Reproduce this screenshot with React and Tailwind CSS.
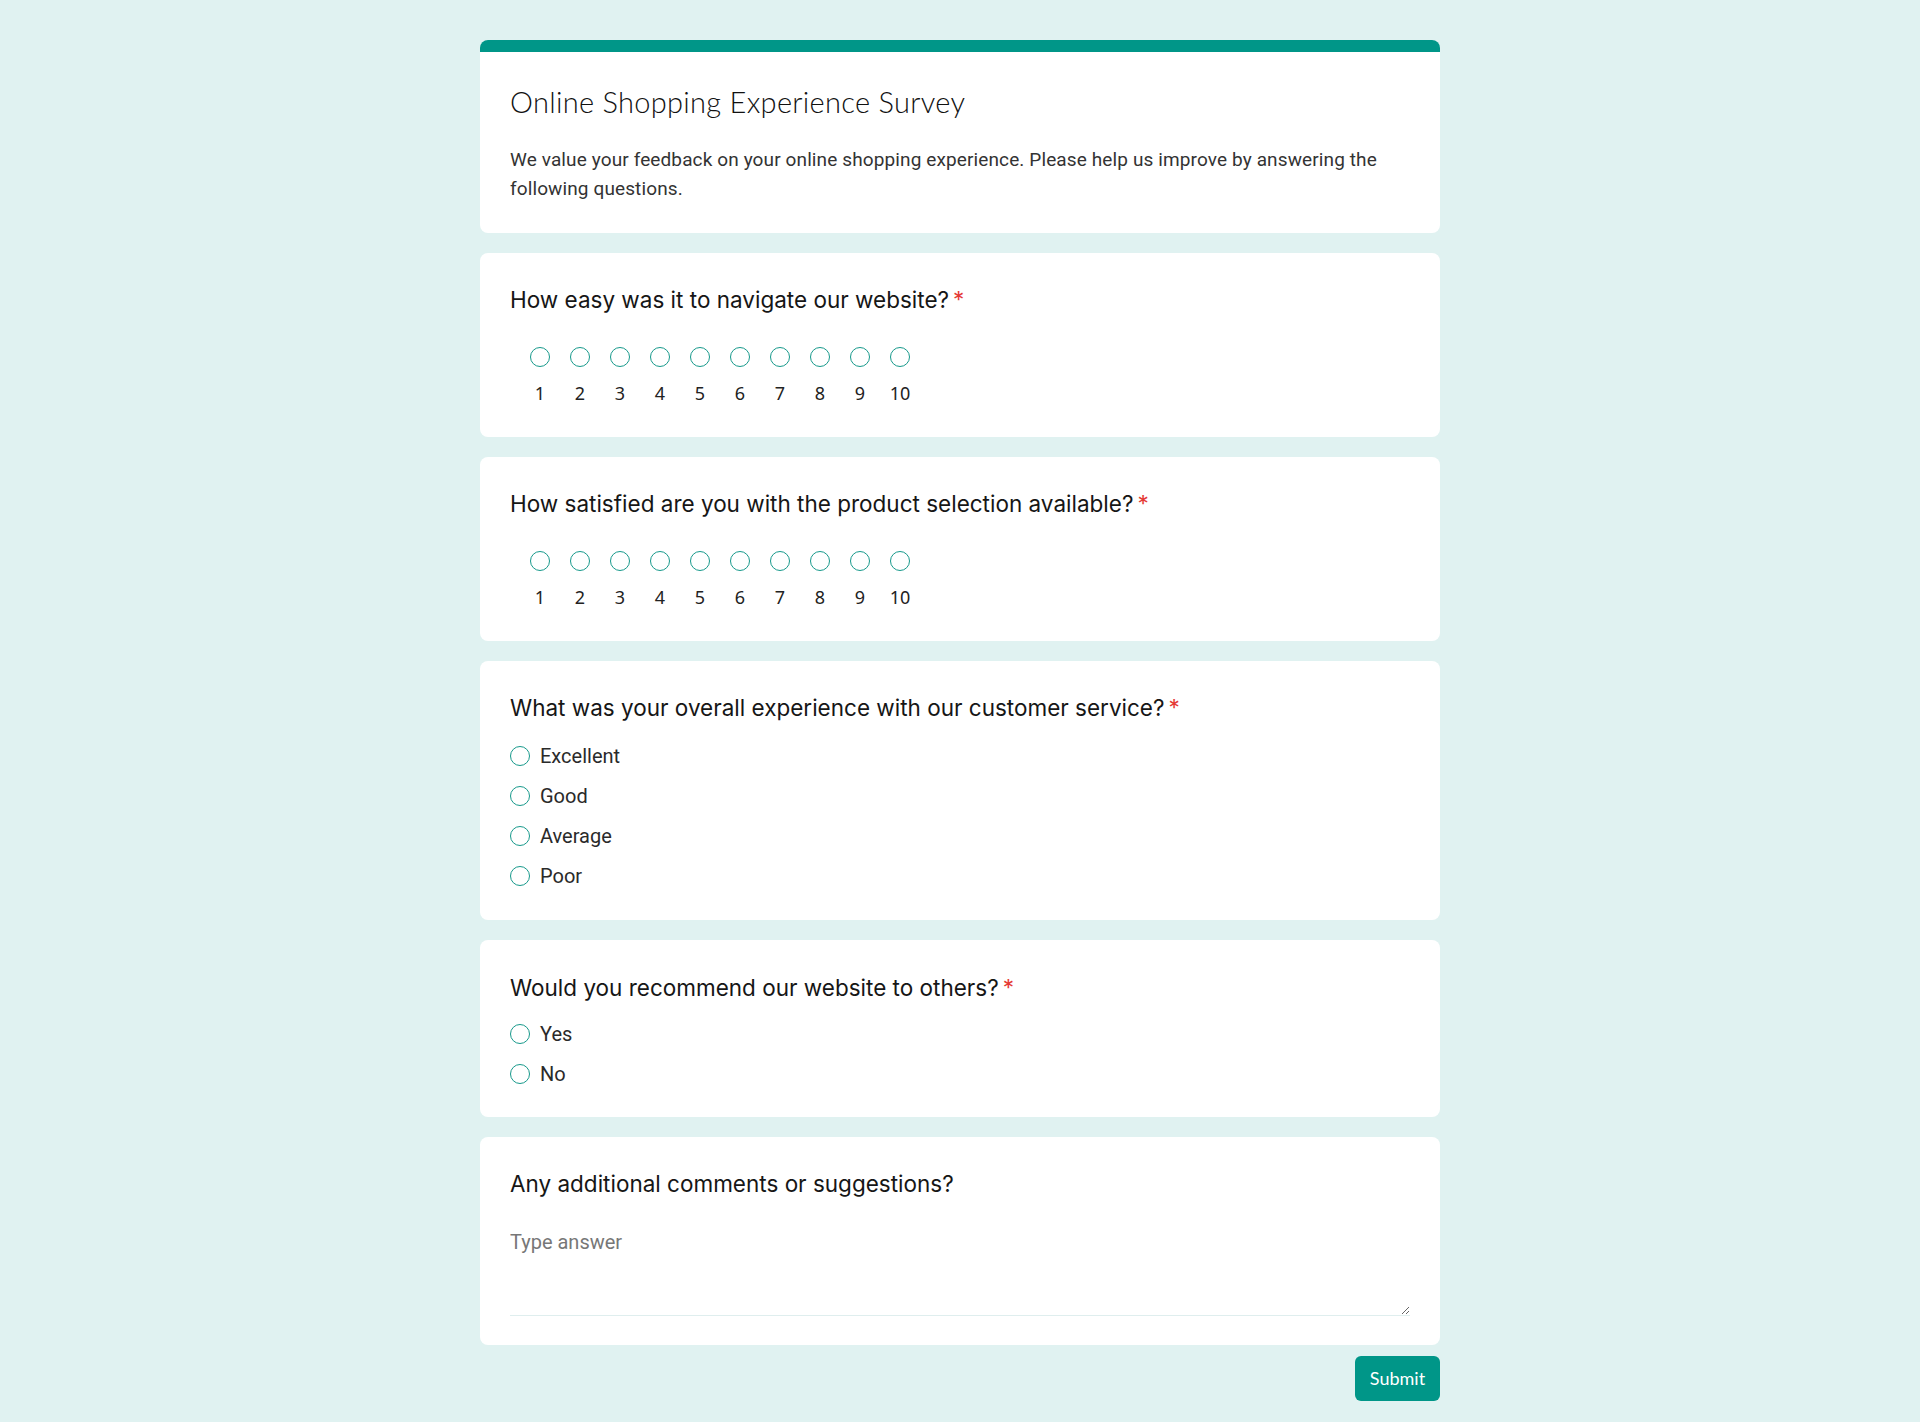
import React from "react";

const scale = [1, 2, 3, 4, 5, 6, 7, 8, 9, 10];

function Circle() {
  return <span className="block w-[20px] h-[20px] rounded-full border-[1.6px] border-[#17998b] bg-white shrink-0" />;
}

function QTitle({ text, required }) {
  return (
    <div className="font-['Inter',sans-serif] text-[22.5px] leading-[28px] text-[#161616]">
      {text}
      {required && <span className="ml-[4px] text-[#e53935]">*</span>}
    </div>
  );
}

function ScaleCard({ title }) {
  return (
    <div className="bg-white rounded-lg px-[30px] pt-[33px] pb-[32px]">
      <QTitle text={title} required />
      <div className="flex ml-[10px] mt-[33px]">
        {scale.map((n) => (
          <div key={n} className="w-[40px] flex flex-col items-center">
            <Circle />
            <span className="mt-[14px] font-['Noto_Sans',sans-serif] text-[18px] leading-[24px] text-[#222]">{n}</span>
          </div>
        ))}
      </div>
    </div>
  );
}

function OptionCard({ title, options, top }) {
  return (
    <div className={top ? "bg-white rounded-lg px-[30px] pt-[33px] pb-[24px]" : "bg-white rounded-lg px-[30px] pt-[34px] pb-[23px]"}>
      <QTitle text={title} required />
      <div className={top ? "flex flex-col mt-[14px]" : "flex flex-col mt-[12px]"}>
        {options.map((o) => (
          <div key={o} className="h-[40px] flex items-center gap-[10px]">
            <Circle />
            <span className="font-['Roboto',sans-serif] text-[20px] leading-[24px] text-[#2a2a2a]">{o}</span>
          </div>
        ))}
      </div>
    </div>
  );
}

export default function App() {
  return (
    <div className="min-h-[1422px] bg-[#e0f2f1] pt-[40px] pb-[21px]">
      <div className="w-[960px] mx-auto flex flex-col gap-[20px]">
        <div className="bg-white rounded-lg overflow-hidden">
          <div className="h-[12px] bg-[#009688]" />
          <div className="px-[30px] pt-[33px] pb-[30px]">
            <h1 className="font-['Lato',sans-serif] font-light text-[29px] leading-[34px] text-[#111] tracking-[0.3px]">
              Online Shopping Experience Survey
            </h1>
            <p className="mt-[26px] font-['Roboto',sans-serif] text-[19px] leading-[29px] tracking-[0.12px] text-[#333]">
              We value your feedback on your online shopping experience. Please help us improve by answering the following questions.
            </p>
          </div>
        </div>

        <ScaleCard title="How easy was it to navigate our website?" />
        <ScaleCard title="How satisfied are you with the product selection available?" />
        <OptionCard
          top
          title="What was your overall experience with our customer service?"
          options={["Excellent", "Good", "Average", "Poor"]}
        />
        <OptionCard title="Would you recommend our website to others?" options={["Yes", "No"]} />

        <div className="bg-white rounded-lg px-[30px] pt-[33px] pb-[29px]">
          <QTitle text="Any additional comments or suggestions?" />
          <textarea
            placeholder="Type answer"
            className="mt-[29px] block w-full h-[89px] resize-y p-0 border-0 border-b border-[#dfeeee] outline-none font-['Roboto',sans-serif] text-[20px] leading-[30px] text-[#333] placeholder:text-[#777]"
          />
        </div>
      </div>
      <div className="w-[960px] mx-auto flex justify-end mt-[11px]">
        <button className="w-[85px] h-[45px] rounded-md bg-[#009688] text-white font-['Lato',sans-serif] text-[18px]">
          Submit
        </button>
      </div>
    </div>
  );
}
